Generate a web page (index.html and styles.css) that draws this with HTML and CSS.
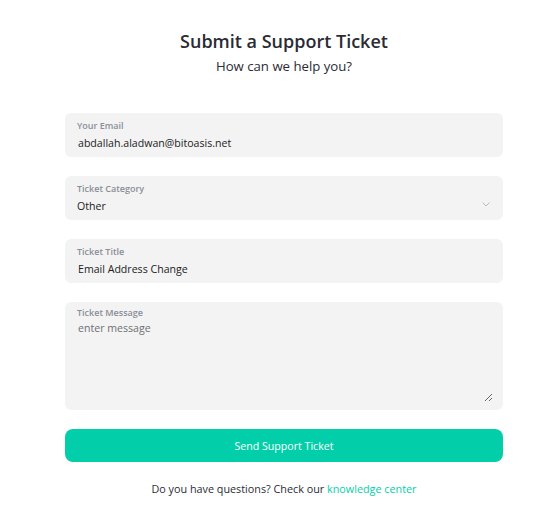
FILE: index.html
```html
<!DOCTYPE html>
<html>
<head>
<meta charset="utf-8">
<link rel="stylesheet" href="styles.css">
</head>
<body>
<main class="page">
  <header class="head">
    <h1 class="title">Submit a Support Ticket</h1>
    <p class="subtitle">How can we help you?</p>
  </header>
  <form class="form">
    <label class="field">
      <span class="label">Your Email</span>
      <input class="input" type="text" value="abdallah.aladwan@bitoasis.net">
    </label>
    <label class="field field-select">
      <span class="label">Ticket Category</span>
      <span class="input input-select">Other</span>
      <svg class="chevron" width="8" height="5" viewBox="0 0 8 5"><path d="M0.5 0.5 L4 4 L7.5 0.5" fill="none" stroke="#b8bcc4" stroke-width="1"/></svg>
    </label>
    <label class="field">
      <span class="label">Ticket Title</span>
      <input class="input" type="text" value="Email Address Change">
    </label>
    <label class="field field-area">
      <span class="label">Ticket Message</span>
      <textarea class="area" placeholder="enter message"></textarea>
    </label>
    <button class="btn" type="button">Send Support Ticket</button>
    <p class="foot">Do you have questions? Check our <a class="link" href="#">knowledge center</a></p>
  </form>
</main>
</body>
</html>
```

FILE: styles.css
```css
* { box-sizing: border-box; }
body {
  margin: 0;
  background: #fff;
  font-family: "Open Sans", "Noto Sans", sans-serif;
  color: #222;
}
.page {
  width: 438px;
  margin-left: 65px;
  padding-top: 29px;
}
.head { text-align: center; }
.title {
  margin: 0;
  font-size: 18px;
  font-weight: 600;
  line-height: 24px;
  color: #2a2b33;
}
.subtitle {
  margin: 4px 0 0;
  font-size: 13.2px;
  line-height: 18px;
  color: #2a2b33;
}
.form {
  margin-top: 38px;
  display: flex;
  flex-direction: column;
  gap: 19px;
}
.field {
  position: relative;
  display: flex;
  flex-direction: column;
  height: 44px;
  padding: 7px 12px 0;
  background: #f3f3f3;
  border-radius: 6px;
}
.label {
  font-size: 9px;
  font-weight: 600;
  line-height: 12px;
  color: #8a8e98;
}
.input {
  margin-top: 3px;
  border: 0;
  padding: 0 0 0 1px;
  background: transparent;
  font-family: inherit;
  font-size: 10.6px;
  line-height: 16px;
  color: #222;
  outline: none;
}
.input-select { padding-left: 0; }
.chevron {
  position: absolute;
  right: 13px;
  top: 26px;
}
.field-area { height: 108px; padding-top: 5px; padding-right: 10px; padding-bottom: 8px; }
.area {
  flex: 1;
  margin-top: 1px;
  border: 0;
  padding: 0 0 0 1px;
  background: transparent;
  font-family: inherit;
  font-size: 10.6px;
  line-height: 16px;
  color: #222;
  outline: none;
  resize: vertical;
}
.area::placeholder { color: #6e6f75; }
.btn {
  height: 33px;
  border: 0;
  border-radius: 8px;
  background: #02cfaa;
  color: #fff;
  font-family: inherit;
  font-size: 10.6px;
  font-weight: 500;
}
.foot {
  margin: 0;
  text-align: center;
  font-size: 10.8px;
  line-height: 16px;
  color: #2a2b33;
}
.link { color: #02cfaa; text-decoration: none; }
```
